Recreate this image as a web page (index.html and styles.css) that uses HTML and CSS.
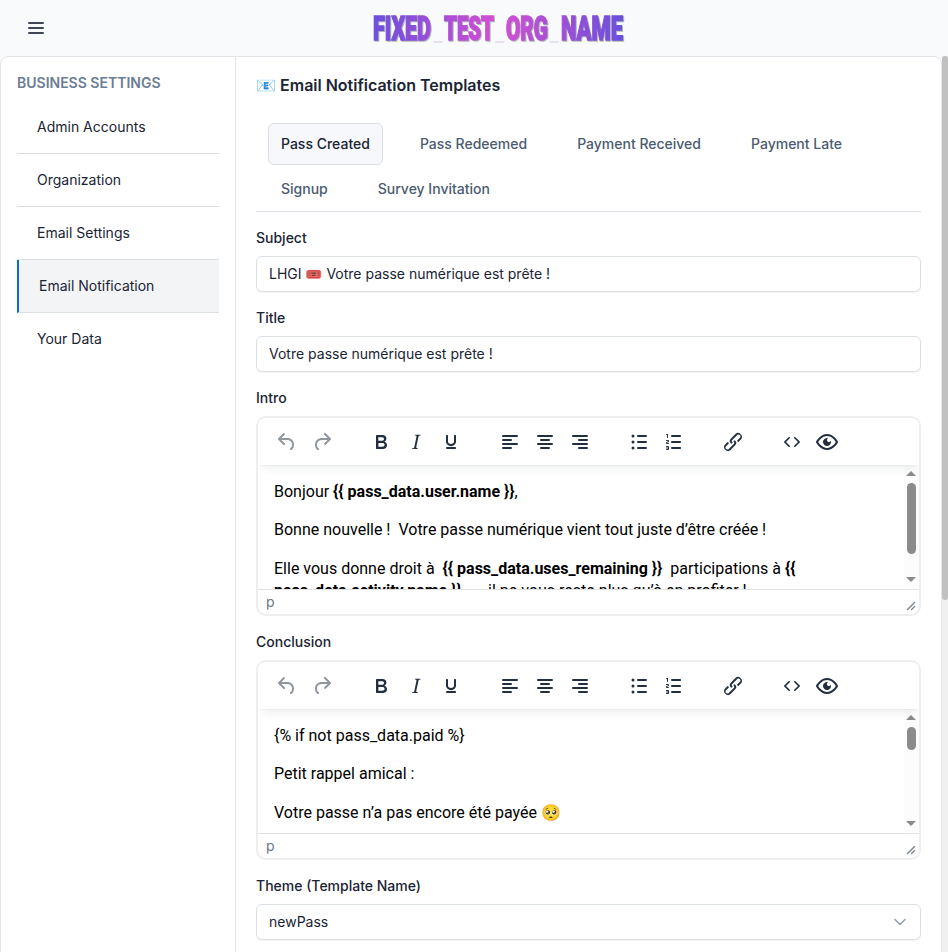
FILE: index.html
```html
<!DOCTYPE html>
<html lang="en">
<head>
<meta charset="utf-8">
<title>Email Notification Templates</title>
<link rel="stylesheet" href="styles.css">
</head>
<body>
<svg class="defs" width="0" height="0">
  <symbol id="undo" viewBox="0 0 24 24"><path d="M6.4 8H12c3.7 0 6.2 2 6.8 5.1.6 2.7-.4 5.6-2.3 6.8a1 1 0 0 1-1-1.8c1.1-.6 1.8-2.7 1.4-4.6-.5-2.1-2.1-3.5-4.9-3.5H6.4l3.3 3.3a1 1 0 1 1-1.4 1.4l-5-5a1 1 0 0 1 0-1.4l5-5a1 1 0 0 1 1.4 1.4L6.4 8Z"/></symbol>
  <symbol id="redo" viewBox="0 0 24 24"><path d="M17.6 10H12c-2.8 0-4.4 1.4-4.9 3.5-.4 2 .3 4 1.4 4.6a1 1 0 1 1-1 1.8c-2-1.2-2.9-4.1-2.3-6.8.6-3 3-5.1 6.8-5.1h5.6l-3.3-3.3a1 1 0 1 1 1.4-1.4l5 5a1 1 0 0 1 0 1.4l-5 5a1 1 0 0 1-1.4-1.4l3.3-3.3Z"/></symbol>
  <symbol id="bold" viewBox="0 0 24 24"><path fill-rule="evenodd" d="M7.8 19c-.3 0-.5 0-.6-.2l-.2-.5V5.7c0-.2 0-.4.2-.5l.6-.2h5c1.5 0 2.7.3 3.5 1 .7.6 1.1 1.4 1.1 2.5a3 3 0 0 1-.6 1.9c-.4.6-1 1-1.6 1.2.4.1.9.3 1.3.6s.8.7 1 1.2c.4.4.5 1 .5 1.6 0 1.3-.4 2.3-1.3 3-.8.7-2.1 1-3.8 1H7.8Zm5-8.3c.6 0 1.2-.1 1.6-.5.4-.3.6-.7.6-1.3 0-1.1-.8-1.7-2.3-1.7H9.3v3.5h3.4Zm.5 6c.7 0 1.3-.1 1.7-.4.4-.4.6-.9.6-1.5s-.2-1-.7-1.4c-.4-.3-1-.4-2-.4H9.4v3.8h4Z"/></symbol>
  <symbol id="italic" viewBox="0 0 24 24"><path d="m16.7 4.7-.1.9h-.3c-.6 0-1 0-1.4.3-.3.3-.4.6-.5 1.1l-2.1 9.8v.6c0 .5.4.8 1.4.8h.2l-.2.8H8l.2-.8h.2c1.1 0 1.8-.5 2-1.5l2-9.8.1-.5c0-.6-.4-.8-1.4-.8h-.3l.2-.9h5.8Z"/></symbol>
  <symbol id="underline" viewBox="0 0 24 24"><path d="M16 5c.6 0 1 .4 1 1v5.5a4 4 0 0 1-.4 1.8l-1 1.4a5.3 5.3 0 0 1-5.5 1 5 5 0 0 1-1.6-1c-.5-.4-.8-.9-1.1-1.4a4 4 0 0 1-.4-1.8V6c0-.6.4-1 1-1s1 .4 1 1v5.5c0 .3 0 .6.2 1l.6.7a3.3 3.3 0 0 0 2.2.8 3.4 3.4 0 0 0 2.2-.8c.3-.2.4-.5.6-.8l.2-.9V6c0-.6.4-1 1-1ZM8 17h8c.6 0 1 .4 1 1s-.4 1-1 1H8a1 1 0 0 1 0-2Z"/></symbol>
  <symbol id="left" viewBox="0 0 24 24"><path d="M5 5h14a1 1 0 0 1 0 2H5a1 1 0 1 1 0-2Zm0 4h8a1 1 0 0 1 0 2H5a1 1 0 1 1 0-2Zm0 8h8a1 1 0 0 1 0 2H5a1 1 0 0 1 0-2Zm0-4h14a1 1 0 0 1 0 2H5a1 1 0 0 1 0-2Z"/></symbol>
  <symbol id="center" viewBox="0 0 24 24"><path d="M5 5h14a1 1 0 0 1 0 2H5a1 1 0 1 1 0-2Zm3 4h8a1 1 0 0 1 0 2H8a1 1 0 1 1 0-2Zm0 8h8a1 1 0 0 1 0 2H8a1 1 0 0 1 0-2Zm-3-4h14a1 1 0 0 1 0 2H5a1 1 0 0 1 0-2Z"/></symbol>
  <symbol id="right" viewBox="0 0 24 24"><path d="M5 5h14a1 1 0 0 1 0 2H5a1 1 0 1 1 0-2Zm6 4h8a1 1 0 0 1 0 2h-8a1 1 0 0 1 0-2Zm0 8h8a1 1 0 0 1 0 2h-8a1 1 0 0 1 0-2Zm-6-4h14a1 1 0 0 1 0 2H5a1 1 0 0 1 0-2Z"/></symbol>
  <symbol id="bullets" viewBox="0 0 24 24"><path d="M11 5h8a1 1 0 0 1 0 2h-8a1 1 0 0 1 0-2Zm0 6h8a1 1 0 0 1 0 2h-8a1 1 0 0 1 0-2Zm0 6h8a1 1 0 0 1 0 2h-8a1 1 0 0 1 0-2Z"/><circle cx="6" cy="6" r="1.5"/><circle cx="6" cy="12" r="1.5"/><circle cx="6" cy="18" r="1.5"/></symbol>
  <symbol id="numbers" viewBox="0 0 24 24"><path d="M10 17h8c.6 0 1 .4 1 1s-.4 1-1 1h-8a1 1 0 0 1 0-2Zm0-6h8c.6 0 1 .4 1 1s-.4 1-1 1h-8a1 1 0 0 1 0-2Zm0-6h8c.6 0 1 .4 1 1s-.4 1-1 1h-8a1 1 0 1 1 0-2ZM6 4v3.5c0 .3-.2.5-.5.5a.5.5 0 0 1-.5-.5V5h-.5a.5.5 0 0 1 0-1H6Zm-1 8.8.2.2h1.3c.3 0 .5.2.5.5s-.2.5-.5.5H4.9a1 1 0 0 1-.9-1V13c0-.4.3-.8.6-1l1.2-.4.2-.3a.2.2 0 0 0-.2-.2H4.5a.5.5 0 0 1-.5-.5c0-.3.2-.5.5-.5h1.6c.5 0 .9.4.9 1v.1c0 .4-.3.8-.6 1l-1.2.4-.2.3ZM7 17v2c0 .6-.4 1-1 1H4.5a.5.5 0 0 1 0-1h1.2c.2 0 .3-.1.3-.3 0-.2-.1-.3-.3-.3H4.4a.4.4 0 1 1 0-.8h1.3c.2 0 .3-.1.3-.3 0-.2-.1-.3-.3-.3H4.5a.5.5 0 1 1 0-1H6c.6 0 1 .4 1 1Z"/></symbol>
  <symbol id="link" viewBox="0 0 24 24"><path d="M6.2 12.3a1 1 0 0 1 1.4 1.4l-2 2a2 2 0 1 0 2.6 2.8l4.8-4.8a1 1 0 0 0 0-1.4 1 1 0 1 1 1.4-1.3 2.9 2.9 0 0 1 0 4L9.6 20a3.9 3.9 0 0 1-5.5-5.5l2-2Zm11.6-.6a1 1 0 0 1-1.4-1.4l2-2a2 2 0 1 0-2.6-2.8L11 10.3a1 1 0 0 0 0 1.4A1 1 0 1 1 9.6 13a2.9 2.9 0 0 1 0-4L14.4 4a3.9 3.9 0 0 1 5.5 5.5l-2 2Z"/></symbol>
  <symbol id="code" viewBox="0 0 24 24"><path d="M9.8 15.7c.3.3.3.8 0 1-.3.4-.9.4-1.2 0l-4.4-4.1a.8.8 0 0 1 0-1.2l4.4-4.2c.3-.3.9-.3 1.2 0 .3.3.3.8 0 1.1L6 12l3.8 3.7ZM14.2 15.7c-.3.3-.3.8 0 1 .4.4.9.4 1.2 0l4.4-4.1c.3-.3.3-.9 0-1.2l-4.4-4.2a.8.8 0 0 0-1.2 0c-.3.3-.3.8 0 1.1L18 12l-3.8 3.7Z"/></symbol>
  <symbol id="eye" viewBox="0 0 24 24"><path fill-rule="evenodd" d="M3.5 12.5c.5.8 1.1 1.6 1.8 2.3 2 2 4.2 3.2 6.7 3.2s4.7-1.2 6.7-3.2a16.2 16.2 0 0 0 2.1-2.8 15.7 15.7 0 0 0-2.1-2.8c-2-2-4.2-3.2-6.7-3.2a9.3 9.3 0 0 0-6.7 3.2A16.2 16.2 0 0 0 3.2 12c0 .2.2.3.3.5Zm-2.4-1 .7-1.2L4 7.8C6.2 5.4 8.9 4 12 4c3 0 5.8 1.4 8.1 3.8a18.2 18.2 0 0 1 2.8 3.7v1l-.7 1.2a18.1 18.1 0 0 1-2.1 2.5c-2.3 2.4-5 3.8-8.1 3.8-3 0-5.8-1.4-8.1-3.8a18.2 18.2 0 0 1-2.8-3.7 1 1 0 0 1 0-1Zm12-3.3a2 2 0 1 0 2.7 2.6 4 4 0 1 1-2.6-2.6Z"/></symbol>
  <symbol id="grip" viewBox="0 0 10 10"><path d="M8.1 1.1A.5.5 0 1 1 9 2l-7 7A.5.5 0 1 1 1 8l7-7ZM8.1 5.1A.5.5 0 1 1 9 6L6 9a.5.5 0 1 1-.9-.9l3-3Z"/></symbol>
</svg>

<header class="topbar">
  <svg class="menu" viewBox="0 0 16 14"><path d="M1 2h14M1 7h14M1 12h14"/></svg>
  <svg class="brand" viewBox="0 0 256 44">
    <defs>
      <linearGradient id="g" gradientUnits="userSpaceOnUse" x1="3" y1="0" x2="253" y2="0">
        <stop offset="0" stop-color="#6a4fdc"/><stop offset=".5" stop-color="#d64fd3"/><stop offset="1" stop-color="#6a4fdc"/>
      </linearGradient>
    </defs>
    <g class="letters" fill="url(#g)" stroke="url(#g)">
      <text x="3" y="33.500" textLength="58" lengthAdjust="spacingAndGlyphs">FIXED</text>
      <text x="74" y="33.500" textLength="50" lengthAdjust="spacingAndGlyphs">TEST</text>
      <text x="136" y="33.500" textLength="42" lengthAdjust="spacingAndGlyphs">ORG</text>
      <text x="191" y="33.500" textLength="62" lengthAdjust="spacingAndGlyphs">NAME</text>
    </g>
    <g class="joins">
      <text x="63.500" y="34.500" textLength="9" lengthAdjust="spacingAndGlyphs">_</text>
      <text x="125" y="34.500" textLength="9" lengthAdjust="spacingAndGlyphs">_</text>
      <text x="179.500" y="34.500" textLength="9" lengthAdjust="spacingAndGlyphs">_</text>
    </g>
  </svg>
</header>

<div class="shell">
  <div class="card">
    <aside class="sidebar">
      <h2>BUSINESS SETTINGS</h2>
      <nav>
        <a>Admin Accounts</a>
        <a>Organization</a>
        <a>Email Settings</a>
        <a class="active">Email Notification</a>
        <a>Your Data</a>
      </nav>
    </aside>
    <main>
      <h1>📧 Email Notification Templates</h1>
      <div class="tabs">
        <a class="active">Pass Created</a><a>Pass Redeemed</a><a>Payment Received</a><a>Payment Late</a><a>Signup</a><a>Survey Invitation</a>
      </div>
      <label>Subject</label>
      <div class="input">LHGI 🎟️ Votre passe numérique est prête !</div>
      <label>Title</label>
      <div class="input">Votre passe numérique est prête !</div>
      <label>Intro</label>
      <div class="editor">
        <div class="toolbar">
          <div class="off"><svg><use href="#undo"/></svg><svg><use href="#redo"/></svg></div>
          <div><svg><use href="#bold"/></svg><svg><use href="#italic"/></svg><svg><use href="#underline"/></svg></div>
          <div><svg><use href="#left"/></svg><svg><use href="#center"/></svg><svg><use href="#right"/></svg></div>
          <div><svg><use href="#bullets"/></svg><svg><use href="#numbers"/></svg></div>
          <div><svg><use href="#link"/></svg></div>
          <div><svg><use href="#code"/></svg><svg><use href="#eye"/></svg></div>
        </div>
        <div class="area">
          <div class="text">
            <p>Bonjour <b>{{ pass_data.user.name }}</b>,</p>
            <p>Bonne nouvelle !&nbsp; Votre passe numérique vient tout juste d’être créée !</p>
            <p>Elle vous donne droit à&nbsp; <b>{{ pass_data.uses_remaining }}</b>&nbsp; participations à <b>{{<br>pass_data.activity.name }}</b>&nbsp; <span class="dash">—</span> il ne vous reste plus qu’à en profiter !</p>
          </div>
          <div class="scroll"><i class="up"></i><i class="thumb"></i><i class="down"></i></div>
        </div>
        <div class="status"><span>p</span><svg><use href="#grip"/></svg></div>
      </div>
      <label>Conclusion</label>
      <div class="editor">
        <div class="toolbar">
          <div class="off"><svg><use href="#undo"/></svg><svg><use href="#redo"/></svg></div>
          <div><svg><use href="#bold"/></svg><svg><use href="#italic"/></svg><svg><use href="#underline"/></svg></div>
          <div><svg><use href="#left"/></svg><svg><use href="#center"/></svg><svg><use href="#right"/></svg></div>
          <div><svg><use href="#bullets"/></svg><svg><use href="#numbers"/></svg></div>
          <div><svg><use href="#link"/></svg></div>
          <div><svg><use href="#code"/></svg><svg><use href="#eye"/></svg></div>
        </div>
        <div class="area">
          <div class="text">
            <p>{% if not pass_data.paid %}</p>
            <p>Petit rappel amical :</p>
            <p>Votre passe n’a pas encore été payée 🥺</p>
          </div>
          <div class="scroll"><i class="up"></i><i class="thumb short"></i><i class="down"></i></div>
        </div>
        <div class="status"><span>p</span><svg><use href="#grip"/></svg></div>
      </div>
      <label>Theme (Template Name)</label>
      <div class="input select"><span>newPass</span><svg viewBox="0 0 16 16"><path d="m3 5.500 5 5 5-5"/></svg></div>
    </main>
  </div>
  <div class="pagescroll"><i></i></div>
</div>
</body>
</html>
```
FILE: styles.css
```css
* { box-sizing: border-box; }
body {
  margin: 0;
  height: 952px;
  overflow: hidden;
  background: #f9fafb;
  color: #1a2434;
  font: 400 14px/20px Inter, "Liberation Sans", sans-serif;
}
.defs { position: absolute; }
.topbar { height: 56px; display: flex; align-items: center; padding-left: 28px; }
.menu { width: 16px; height: 14px; fill: none; stroke: #3f4854; stroke-width: 2; stroke-linecap: round; }
.brand {
  width: 256px; height: 44px; margin-left: 326px;
  font: 900 33px Roboto, "Liberation Sans", sans-serif;
}
.letters { stroke-width: 1.4; filter: drop-shadow(1px 1px 0 rgba(70, 90, 80, .42)); }
.joins { fill: #e8dfed; font-weight: 300; }

.shell { display: flex; height: 896px; }
.card {
  flex: 1;
  display: flex;
  height: 920px;
  background: #fff;
  border: 1px solid #e2e5ea;
  border-radius: 8px;
}
.pagescroll { width: 6px; background: #f0f0f0; }
.pagescroll i { display: block; height: 544px; background: #c1c1c1; border-radius: 3px; }

.sidebar { width: 235px; padding: 16px 16px 0; border-right: 1px solid #e2e5ea; }
.sidebar h2 { margin: 0 0 8px; font-size: 14px; line-height: 20px; font-weight: 600; color: #6b7c93; }
.sidebar a {
  display: flex; align-items: center;
  height: 53px; padding-left: 20px;
  border-bottom: 1px solid #dadfe6;
}
.sidebar a:last-child { border-color: transparent; }
.sidebar a.active { background: #f3f4f6; border-left: 2px solid #066fd1; }

main { flex: 1; padding: 16px 20px 0; }
h1 { margin: 0; font-size: 16px; line-height: 24px; font-weight: 600; }
.tabs {
  display: flex; flex-wrap: wrap;
  height: 89px; margin: 26px 0 16px; padding-left: 12px;
  border-bottom: 1px solid #dadfe6;
  align-content: flex-start;
  column-gap: 24px; row-gap: 3px;
}
.tabs a { height: 42px; padding: 0 12px; border: 1px solid transparent; border-radius: 6px; line-height: 40px; font-weight: 500; color: #4b5b70; }
.tabs a.active { color: #1a2434; background: #f6f8fb; border-color: #dadfe6; }
label { display: block; height: 20px; margin-bottom: 8px; font-weight: 500; }
.input {
  display: flex; align-items: center; white-space: pre;
  height: 36px; margin-bottom: 16px; padding: 0 12px;
  background: #fff; border: 1px solid #dadfe6; border-radius: 6px;
  box-shadow: 0 1px 1px rgba(31, 41, 55, .06);
}
.select { justify-content: space-between; }
.select svg { width: 16px; height: 16px; fill: none; stroke: #929dab; stroke-width: 1.5; stroke-linecap: round; stroke-linejoin: round; }

.editor {
  height: 200px; margin-bottom: 16px;
  border: 2px solid #eee; border-radius: 10px;
  overflow: hidden; background: #fff;
}
.toolbar {
  position: relative; z-index: 1;
  display: flex; align-items: center; gap: 25px;
  height: 47px; padding-left: 12px;
  background: #fff;
  box-shadow: 0 2px 2px -2px rgba(34, 47, 62, .1), 0 8px 8px -4px rgba(34, 47, 62, .07);
}
.toolbar div { display: flex; gap: 1px; }
.toolbar svg { width: 34px; height: 24px; fill: #222f3e; }
.toolbar .off { opacity: .5; }
.area { display: flex; height: 124px; overflow: hidden; }
.text { flex: 1; padding: 16px 0 0 16px; color: #000; font: 16px/22.4px Roboto, sans-serif; white-space: nowrap; }
.text p { margin: 0 0 16px; }
.dash { margin-right: 2px; }
.scroll { width: 15px; background: #fcfcfc; display: flex; flex-direction: column; align-items: center; padding: 6px 1px 7px 0; }
.up, .down { border: solid transparent; border-width: 0 5px; }
.up { border-bottom: 5px solid #8b8b8b; }
.down { border-top: 5px solid #8b8b8b; margin-top: auto; }
.thumb { width: 9px; height: 71px; margin: 7px 0 0 1px; border-radius: 5px; background: #8b8b8b; }
.short { height: 23px; }
.status {
  display: flex; justify-content: space-between; align-items: center;
  height: 25px; padding: 0 3px 0 8px;
  border-top: 1px solid #e3e3e3; color: #6b7885;
}
.status svg { width: 10px; height: 10px; margin-top: 7px; fill: #7c8792; }
```
